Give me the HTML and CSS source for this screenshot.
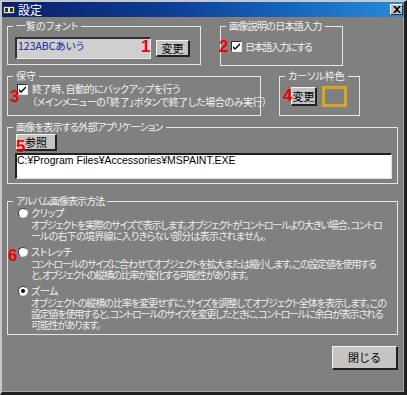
FILE: index.html
```html
<!DOCTYPE html>
<html lang="ja">
<head>
<meta charset="utf-8">
<title>設定</title>
<link rel="stylesheet" href="styles.css">
</head>
<body>
<div class="window">
  <div class="titlebar">
    <svg class="app-icon" width="12" height="8" viewBox="0 0 12 8">
      <rect x="0.5" y="0.5" width="11" height="7" fill="#e0e0e0" stroke="#404040"/>
      <rect x="2" y="2" width="3" height="4" fill="#303030"/>
      <rect x="7" y="2" width="3" height="4" fill="#303030"/>
    </svg>
    <span class="title">設定</span>
    <span class="close">
      <svg width="8" height="7" viewBox="0 0 8 7"><path d="M0 0h2l2 2 2-2h2L5 3.5 8 7H6L4 5 2 7H0l3-3.5z" fill="#000"/></svg>
    </span>
  </div>

  <div class="content">
    <div class="row row-top">
      <div class="group g-font">
        <span class="legend ls-l1">一覧のフォント</span>
        <div class="font-preview">123ABCあいう</div>
        <button class="btn btn-change">変更</button>
      </div>
      <div class="group g-ime">
        <span class="legend ls-l2">画像説明の日本語入力</span>
        <div class="check-row">
          <span class="checkbox"><svg width="7" height="7" viewBox="0 0 7 7"><path d="M0 3l2 2 5-5v2L2 7 0 5z" fill="#000"/></svg></span>
          <span class="label ls-ime">日本語入力にする</span>
        </div>
      </div>
    </div>

    <div class="row row-mid">
      <div class="group g-backup">
        <span class="legend">保守</span>
        <div class="check-row">
          <span class="checkbox"><svg width="7" height="7" viewBox="0 0 7 7"><path d="M0 3l2 2 5-5v2L2 7 0 5z" fill="#000"/></svg></span>
          <div class="backup-text">
            <div class="ls-b1">終了時、自動的にバックアップを行う</div>
            <div class="ls-b2">（メインメニューの「終了」ボタンで終了した場合のみ実行）</div>
          </div>
        </div>
      </div>
      <div class="group g-cursor">
        <span class="legend ls-l4">カーソル枠色</span>
        <div class="cursor-row">
          <button class="btn btn-cursor">変更</button>
          <span class="color-swatch"></span>
        </div>
      </div>
    </div>

    <div class="group g-app">
      <span class="legend ls-l5">画像を表示する外部アプリケーション</span>
      <button class="btn btn-browse">参照</button>
      <div class="path-field">C:¥Program Files¥Accessories¥MSPAINT.EXE</div>
    </div>

    <div class="group g-album">
      <span class="legend ls-l6">アルバム画像表示方法</span>
      <div class="option opt-clip">
        <span class="radio"></span>
        <div class="opt-text">
          <div class="opt-title">クリップ</div>
          <div class="desc ls-d1">オブジェクトを実際のサイズで表示します。オブジェクトがコントロールより大きい場合、コントロ</div>
          <div class="desc ls-d2">ールの右下の境界線に入りきらない部分は表示されません。</div>
        </div>
      </div>
      <div class="option opt-stretch">
        <span class="radio"></span>
        <div class="opt-text">
          <div class="opt-title">ストレッチ</div>
          <div class="desc ls-d3">コントロールのサイズに合わせてオブジェクトを拡大または縮小します。この設定値を使用する</div>
          <div class="desc ls-d4">と、オブジェクトの縦横の比率が変化する可能性があります。</div>
        </div>
      </div>
      <div class="option opt-zoom">
        <span class="radio selected"></span>
        <div class="opt-text">
          <div class="opt-title">ズーム</div>
          <div class="desc ls-d5">オブジェクトの縦横の比率を変更せずに、サイズを調整してオブジェクト全体を表示します。この</div>
          <div class="desc ls-d6">設定値を使用すると、コントロールのサイズを変更したときに、コントロールに余白が表示される</div>
          <div class="desc ls-d7">可能性があります。</div>
        </div>
      </div>
    </div>

    <div class="footer">
      <button class="btn btn-close">閉じる</button>
    </div>
  </div>

  <span class="mark m1">1</span>
  <span class="mark m2">2</span>
  <span class="mark m3">3</span>
  <span class="mark m4">4</span>
  <span class="mark m5">5</span>
  <span class="mark m6">6</span>
</div>
</body>
</html>
```

FILE: styles.css
```css
* { box-sizing: border-box; }

html, body {
  margin: 0;
  padding: 0;
  background: #000;
}

body {
  font-family: "Noto Sans CJK JP", "Noto Sans", sans-serif;
  font-feature-settings: "palt";
  color: #f2f2f2;
}

.window {
  position: relative;
  width: 407px;
  height: 395px;
  background: #808080;
  border-style: solid;
  border-width: 2px 3px 3px 2px;
  border-color: #c8c8c8 #202020 #202020 #c8c8c8;
  box-shadow: inset -1px -1px 0 #a8a8a8;
  overflow: hidden;
}

/* Title bar */
.titlebar {
  height: 15px;
  display: flex;
  align-items: center;
  padding: 0 0 0 1px;
  background: linear-gradient(to right, #0a1e6a 0%, #0d3c92 40%, #1464bc 70%, #2a8ad6 100%);
}

.app-icon { margin-right: 3px; }

.title {
  font-size: 12px;
  line-height: 15px;
  color: #fff;
}

.close {
  margin-left: auto;
  margin-right: 1px;
  width: 13px;
  height: 11px;
  background: #c0c0c0;
  border-style: solid;
  border-width: 1px;
  border-color: #fff #303030 #303030 #fff;
  display: flex;
  align-items: center;
  justify-content: center;
}

/* Letter spacing tuned so each line spans the width it has in the dialog */
.ls-l1 { letter-spacing: 0; }
.ls-l2 { letter-spacing: -0.7px; }
.ls-l4 { letter-spacing: 0; }
.ls-l5 { letter-spacing: -0.7px; }
.ls-l6 { letter-spacing: -0.9px; }
.ls-ime { letter-spacing: -1.4px; }
.ls-b1 { letter-spacing: -0.4px; }
.ls-b2 { letter-spacing: -0.4px; }
.ls-d1 { letter-spacing: -1.14px; }
.ls-d2 { letter-spacing: -0.75px; }
.ls-d3 { letter-spacing: -1.22px; }
.ls-d4 { letter-spacing: -1.3px; }
.ls-d5 { letter-spacing: -1.0px; }
.ls-d6 { letter-spacing: -1.19px; }
.ls-d7 { letter-spacing: -1.25px; }

/* Content */
.content {
  padding: 9px 6px 0 5px;
}

.row {
  display: flex;
  align-items: flex-start;
}

.group {
  position: relative;
  border: 1px solid #e6e6e6;
}

.legend {
  position: absolute;
  top: -8px;
  left: 5px;
  padding: 0 3px;
  background: #808080;
  font-size: 10px;
  line-height: 14px;
  white-space: nowrap;
}

.btn {
  margin: 0;
  padding: 0;
  font-family: "Noto Sans CJK JP", sans-serif;
  font-size: 11px;
  color: #000;
  background: #c4c4c4;
  border-style: solid;
  border-width: 1px 2px 2px 1px;
  border-color: #f4f4f4 #202020 #202020 #f4f4f4;
  line-height: 1;
}

/* Row 1 */
.row-top { gap: 19px; }

.g-font {
  width: 194px;
  height: 39px;
  display: flex;
  align-items: flex-start;
  padding: 10px 0 0 7px;
}

.font-preview {
  width: 136px;
  height: 22px;
  background: #cfcfcf;
  border-style: solid;
  border-width: 2px 1px 1px 2px;
  border-color: #303030 #e8e8e8 #e8e8e8 #303030;
  color: #1c1c9c;
  font-family: "Noto Sans CJK JP", sans-serif;
  font-size: 10.5px;
  line-height: 13px;
  padding: 0 0 0 1px;
}

.btn-change {
  width: 34px;
  height: 17px;
  margin: 3px 0 0 5px;
}

.g-ime {
  width: 123px;
  height: 40px;
  padding: 13px 0 0 10px;
}

.check-row {
  display: flex;
  align-items: flex-start;
}

.checkbox {
  flex: none;
  width: 11px;
  height: 11px;
  background: #fff;
  border-style: solid;
  border-width: 1px;
  border-color: #303030 #e8e8e8 #e8e8e8 #303030;
  display: flex;
  align-items: center;
  justify-content: center;
}

.g-ime .checkbox { margin-top: 1px; }

.label {
  margin-left: 3px;
  font-size: 10px;
  line-height: 13px;
  white-space: nowrap;
}

/* Row 2 */
.row-mid {
  margin-top: 10px;
  gap: 18px;
}

.g-backup {
  width: 254px;
  height: 40px;
  padding: 5px 0 0 9px;
}

.g-backup .checkbox { margin-top: 2px; }

.backup-text {
  margin-left: 4px;
  font-size: 10px;
  line-height: 13px;
  white-space: nowrap;
}

.g-cursor {
  width: 81px;
  height: 40px;
  padding: 9px 0 0 11px;
}

.cursor-row {
  display: flex;
  align-items: flex-start;
}

.btn-cursor {
  width: 26px;
  height: 19px;
  margin-top: 1px;
}

.color-swatch {
  width: 25px;
  height: 21px;
  margin-left: 5px;
  border: 3px solid #d8a81c;
}

/* App group */
.g-app {
  margin-top: 11px;
  height: 57px;
  padding: 6px 0 0 8px;
}

.btn-browse {
  display: block;
  width: 41px;
  height: 17px;
}

.path-field {
  margin: 2px 0 0 -1px;
  width: 377px;
  height: 26px;
  background: #fff;
  border-style: solid;
  border-width: 2px 1px 1px 2px;
  border-color: #202020 #e0e0e0 #e0e0e0 #202020;
  color: #000;
  font-family: "Liberation Sans", "Noto Sans CJK JP", sans-serif;
  font-size: 10.5px;
  line-height: 11px;
  padding: 0;
}

/* Album group */
.g-album {
  margin-top: 17px;
  height: 134px;
  padding: 4px 0 0 10px;
}

.option {
  display: flex;
  align-items: flex-start;
  margin-bottom: 4px;
}

.radio {
  flex: none;
  position: relative;
  width: 10px;
  height: 10px;
  margin-top: 2px;
  border-radius: 50%;
  background: #fff;
  border: 1px solid #404040;
  border-color: #404040 #e0e0e0 #e0e0e0 #404040;
}

.radio.selected::after {
  content: "";
  position: absolute;
  left: 2px;
  top: 2px;
  width: 4px;
  height: 4px;
  border-radius: 50%;
  background: #000;
}

.opt-text {
  margin-left: 3px;
  white-space: nowrap;
}

.opt-title {
  font-size: 10px;
  line-height: 13px;
  letter-spacing: -0.3px;
}

.desc {
  font-size: 10px;
  line-height: 11px;
  color: #ededed;
}

/* Footer */
.footer {
  display: flex;
  justify-content: flex-end;
  margin-top: 11px;
}

.btn-close {
  width: 66px;
  height: 24px;
  font-size: 11px;
}

/* Annotation numbers (overlay) */
.mark {
  position: absolute;
  font-family: "Liberation Sans", sans-serif;
  font-weight: bold;
  font-size: 17px;
  line-height: 17px;
  color: #f00000;
}

.m1 { left: 139px; top: 36px; }
.m2 { left: 217px; top: 36px; }
.m3 { left: 8px; top: 86px; }
.m4 { left: 281px; top: 85px; }
.m5 { left: 14px; top: 136px; }
.m6 { left: 6px; top: 245px; }
```
